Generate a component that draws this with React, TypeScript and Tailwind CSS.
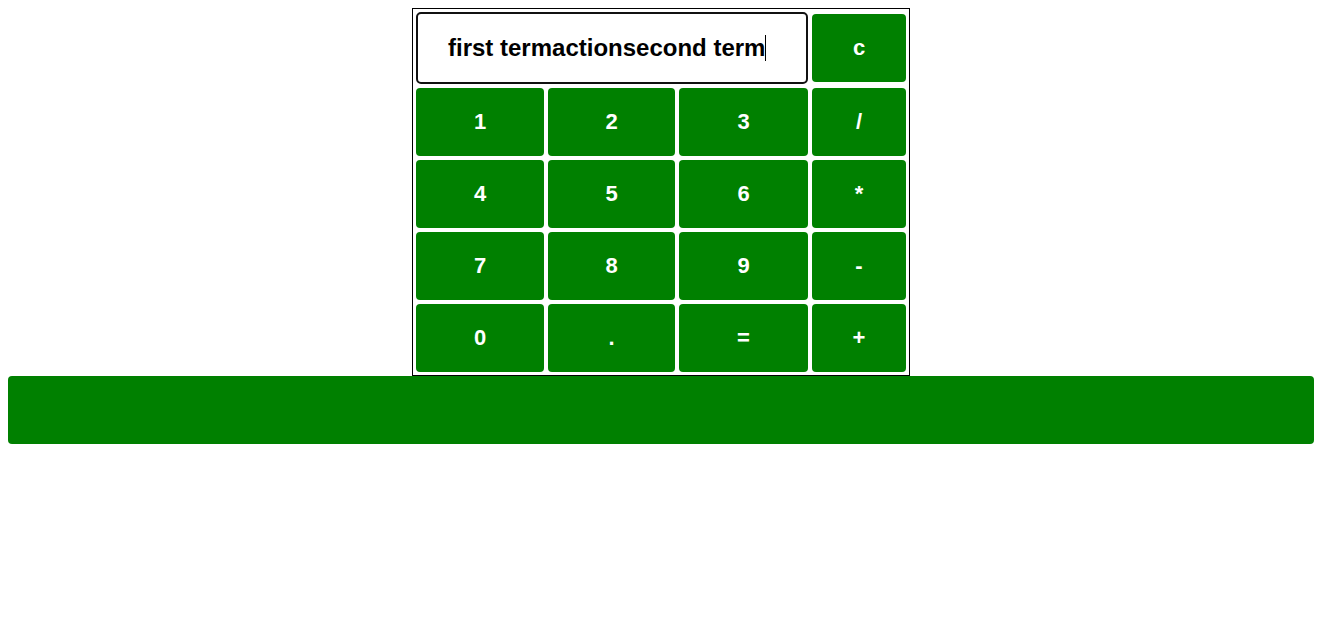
const rows = [
  ["1", "2", "3", "/"],
  ["4", "5", "6", "*"],
  ["7", "8", "9", "-"],
  ["0", ".", "=", "+"],
]

function Key({ label }: { label: string }) {
  return (
    <button className="h-[68px] w-full rounded-[4px] bg-[#008000] pb-0.5 text-[22px] font-bold text-white">
      {label}
    </button>
  )
}

export default function App() {
  return (
    <div className="min-h-screen bg-white p-2 font-['Liberation_Sans',Arial,sans-serif]">
      <div className="mx-auto w-[498px] border border-black p-[3px]">
        <div className="grid grid-cols-[128px_127px_129px_94px] gap-1">
          <div className="col-span-3 flex h-[72px] items-center rounded-[5px] border-2 border-[#111] pl-[30px] text-[24px] font-bold text-black">
            <span>first termactionsecond term</span>
            <span className="inline-block h-[26px] w-px bg-black" />
          </div>
          <div className="flex items-center">
            <Key label="c" />
          </div>
          {rows.map((row) =>
            row.map((k) => <Key key={k} label={k} />)
          )}
        </div>
      </div>
      <button className="block h-[68px] w-full rounded-[4px] bg-[#008000]" />
    </div>
  )
}
